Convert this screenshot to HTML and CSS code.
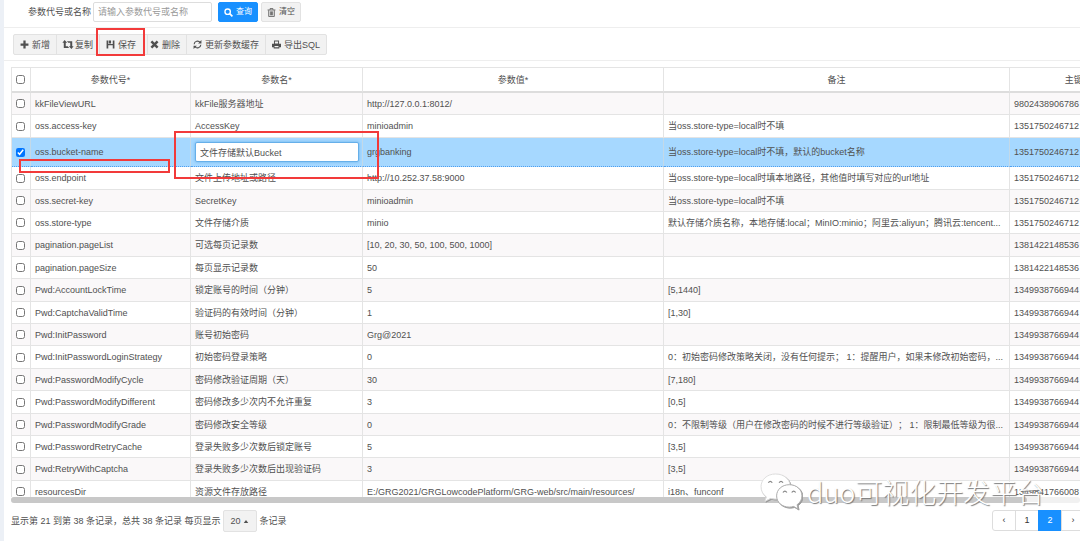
FILE: index.html
```html
<!DOCTYPE html>
<html lang="zh-CN">
<head>
<meta charset="utf-8">
<title>参数管理</title>
<link rel="stylesheet" href="styles.css">
</head>
<body>
<main class="page">
  <form class="search">
    <label for="kw">参数代号或名称</label>
    <input id="kw" class="field" type="text" placeholder="请输入参数代号或名称">
    <button type="button" class="btn primary"><svg class="ico" viewBox="0 0 16 16"><circle cx="6.5" cy="6.5" r="4.8" fill="none" stroke="currentColor" stroke-width="2.4"/><path d="M10 10l5 5" stroke="currentColor" stroke-width="3"/></svg>查询</button>
    <button type="button" class="btn"><svg class="ico" viewBox="0 0 16 16"><path d="M1 3.5h14M5.5 3V1h5v2M3 4v11h10V4M6 6v7M8 6v7M10 6v7" fill="none" stroke="currentColor" stroke-width="1.4"/></svg>清空</button>
  </form>
  <div class="toolbar">
    <div class="group">
      <button type="button"><svg class="ico" viewBox="0 0 16 16"><path d="M8 1v14M1 8h14" stroke="currentColor" stroke-width="4"/></svg>新增</button>
      <button type="button" class="copy"><svg class="ico wide" viewBox="0 0 20 16"><path d="M4 0L0 5h2.500v9H12l-2.500-3H6V5h2.500zM16 16l4-5h-2.500V2H8l2.500 3H14v6h-2.500z" fill="currentColor"/></svg>复制</button>
      <button type="button" class="save"><svg class="ico" viewBox="0 0 16 16"><path d="M1 1h3v6h8V1h3v14h-3V9.500H4V15H1zM5 1h4v5H5z" fill="currentColor"/></svg>保存</button>
      <button type="button" class="remove"><svg class="ico" viewBox="0 0 16 16"><path d="M2.500 2.500l11 11M13.500 2.500l-11 11" stroke="currentColor" stroke-width="4.400"/></svg>删除</button>
      <button type="button"><svg class="ico" viewBox="0 0 16 16"><path d="M2 7.500A6 6 0 0 1 12.800 4.500M14 8.500A6 6 0 0 1 3.200 11.500" fill="none" stroke="currentColor" stroke-width="2"/><path d="M15 0v6H9zM1 16v-6h6z" fill="currentColor"/></svg>更新参数缓存</button>
      <button type="button"><svg class="ico" viewBox="0 0 16 16"><path d="M3.500 1h9v5.500H16V13h-3v2H3v-2H0V6.500h3.500z" fill="currentColor"/><path d="M5.200 2.800h5.600V6H5.200zM4.500 10.500h7v2.500h-7z" fill="#f2f2f2"/></svg>导出SQL</button>
    </div>
  </div>
  <section class="grid">
    <div class="viewport">
      <table>
        <colgroup><col class="c-check"><col class="c-code"><col class="c-name"><col class="c-value"><col class="c-note"><col class="c-id"></colgroup>
        <thead>
          <tr><th><input type="checkbox" aria-label="全选"></th><th>参数代号*</th><th>参数名*</th><th>参数值*</th><th>备注</th><th>主键*</th></tr>
        </thead>
        <tbody>
          <tr><td><input type="checkbox" aria-label="选择"></td><td>kkFileViewURL</td><td>kkFile服务器地址</td><td>http://127.0.0.1:8012/</td><td></td><td>9802438906786</td></tr>
          <tr><td><input type="checkbox" aria-label="选择"></td><td>oss.access-key</td><td>AccessKey</td><td>minioadmin</td><td>当oss.store-type=local时不填</td><td>1351750246712</td></tr>
          <tr class="selected"><td><input type="checkbox" aria-label="选择" checked></td><td>oss.bucket-name</td><td><input class="edit" type="text" aria-label="参数名" value="文件存储默认Bucket"></td><td>grgbanking</td><td>当oss.store-type=local时不填，默认的bucket名称</td><td>1351750246712</td></tr>
          <tr><td><input type="checkbox" aria-label="选择"></td><td>oss.endpoint</td><td>文件上传地址或路径</td><td>http://10.252.37.58:9000</td><td>当oss.store-type=local时填本地路径，其他值时填写对应的url地址</td><td>1351750246712</td></tr>
          <tr><td><input type="checkbox" aria-label="选择"></td><td>oss.secret-key</td><td>SecretKey</td><td>minioadmin</td><td>当oss.store-type=local时不填</td><td>1351750246712</td></tr>
          <tr><td><input type="checkbox" aria-label="选择"></td><td>oss.store-type</td><td>文件存储介质</td><td>minio</td><td>默认存储介质名称，本地存储:local；MinIO:minio；阿里云:aliyun；腾讯云:tencent...</td><td>1351750246712</td></tr>
          <tr><td><input type="checkbox" aria-label="选择"></td><td>pagination.pageList</td><td>可选每页记录数</td><td>[10, 20, 30, 50, 100, 500, 1000]</td><td></td><td>1381422148536</td></tr>
          <tr><td><input type="checkbox" aria-label="选择"></td><td>pagination.pageSize</td><td>每页显示记录数</td><td>50</td><td></td><td>1381422148536</td></tr>
          <tr><td><input type="checkbox" aria-label="选择"></td><td>Pwd:AccountLockTime</td><td>锁定账号的时间（分钟）</td><td>5</td><td>[5,1440]</td><td>1349938766944</td></tr>
          <tr><td><input type="checkbox" aria-label="选择"></td><td>Pwd:CaptchaValidTime</td><td>验证码的有效时间（分钟）</td><td>1</td><td>[1,30]</td><td>1349938766944</td></tr>
          <tr><td><input type="checkbox" aria-label="选择"></td><td>Pwd:InitPassword</td><td>账号初始密码</td><td>Grg@2021</td><td></td><td>1349938766944</td></tr>
          <tr><td><input type="checkbox" aria-label="选择"></td><td>Pwd:InitPasswordLoginStrategy</td><td>初始密码登录策略</td><td>0</td><td>0：初始密码修改策略关闭，没有任何提示； 1：提醒用户，如果未修改初始密码，...</td><td>1349938766944</td></tr>
          <tr><td><input type="checkbox" aria-label="选择"></td><td>Pwd:PasswordModifyCycle</td><td>密码修改验证周期（天）</td><td>30</td><td>[7,180]</td><td>1349938766944</td></tr>
          <tr><td><input type="checkbox" aria-label="选择"></td><td>Pwd:PasswordModifyDifferent</td><td>密码修改多少次内不允许重复</td><td>3</td><td>[0,5]</td><td>1349938766944</td></tr>
          <tr><td><input type="checkbox" aria-label="选择"></td><td>Pwd:PasswordModifyGrade</td><td>密码修改安全等级</td><td>0</td><td class="full">0：不限制等级（用户在修改密码的时候不进行等级验证）； 1：限制最低等级为很...</td><td>1349938766944</td></tr>
          <tr><td><input type="checkbox" aria-label="选择"></td><td>Pwd:PasswordRetryCache</td><td>登录失败多少次数后锁定账号</td><td>5</td><td>[3,5]</td><td>1349938766944</td></tr>
          <tr><td><input type="checkbox" aria-label="选择"></td><td>Pwd:RetryWithCaptcha</td><td>登录失败多少次数后出现验证码</td><td>3</td><td>[3,5]</td><td>1349938766944</td></tr>
          <tr><td><input type="checkbox" aria-label="选择"></td><td>resourcesDir</td><td>资源文件存放路径</td><td>E:/GRG2021/GRGLowcodePlatform/GRG-web/src/main/resources/</td><td>i18n、funconf</td><td>1349841766008</td></tr>
        </tbody>
      </table>
    </div>
    <div class="track"><div class="thumb"></div></div>
  </section>
  <footer class="footer">
    <span>显示第 21 到第 38 条记录，总共 38 条记录 每页显示</span>
    <button type="button" class="size">20<svg class="caret" viewBox="0 0 6 4"><path d="M0 4l3-4 3 4z" fill="currentColor"/></svg></button>
    <span>条记录</span>
    <nav class="pages" aria-label="分页"><a href="#">‹</a><a href="#">1</a><a href="#" class="current">2</a><a href="#">›</a></nav>
  </footer>
</main>
<div class="mark mark-save"></div>
<div class="mark mark-row"></div>
<div class="mark mark-edit"></div>
<div class="watermark">
  <svg class="logo" viewBox="0 0 44 40">
    <g class="bubbles" fill="#fff" stroke="#ddd" stroke-width="1">
      <path d="M16 1C7 1 1 7 1 14c0 4.500 2 8 5.500 10.500L5 29l6-3c10 3 20-3 20-12C31 7 25 1 16 1z"/>
      <path d="M30 12c-7.500 0-13 5-13 11.500S22.500 35 30 35c1.500 0 3-.200 4.500-.700L39 37l-1-4.500c3.200-2.200 5-5.500 5-9C43 17 37.500 12 30 12z" stroke="#aaa"/>
    </g>
    <path d="M8.500 10q2-3 4 0M19.500 10q2-3 4 0M23.500 20q2-3 4 0M32.500 20q2-3 4 0" fill="none" stroke="#888" stroke-width="1.300"/>
  </svg>
  <span>duo可视化开发平台</span>
</div>
</body>
</html>
```
FILE: styles.css
```css
* { box-sizing: border-box; }
body {
  margin: 0;
  overflow: hidden;
  background: #fff;
  color: #505050;
  font: 9px/12px "Liberation Sans", "Noto Sans CJK SC", sans-serif;
}
button, input { font: inherit; color: inherit; margin: 0; }
.page {
  position: relative;
  min-height: 100vh;
  border-left: 4px solid #ecf0f6;
}
.ico { width: 9px; height: 9px; margin-right: 3px; flex: none; }
.ico.wide { width: 12px; margin-right: 1px; }

.search {
  display: flex;
  align-items: center;
  padding: 2px 0 5px 24px;
  border-bottom: 1px solid #eee;
}
.field {
  width: 119px;
  height: 20px;
  margin: 0 6px 0 2px;
  padding: 0 4px;
  border: 1px solid #ddd;
  border-radius: 2px;
  background: #fff;
}
.field::placeholder { color: #999; }
.btn {
  display: flex;
  align-items: center;
  justify-content: center;
  width: 40px;
  height: 20px;
  margin-right: 3px;
  padding: 0;
  border: 1px solid #e2e2e2;
  border-radius: 2px;
  background: #f2f2f2;
  font-size: 8px;
}
.btn.primary { border-color: #1890ff; background: #1890ff; color: #fff; }

.toolbar { padding: 6px 9px 5px; border-bottom: 1px solid #eee; }
.group {
  display: inline-flex;
  vertical-align: top;
  height: 21px;
  border: 1px solid #e2e2e2;
  border-radius: 2px;
  background: #f2f2f2;
}
.group button {
  display: flex;
  align-items: center;
  padding: 0 6px;
  border: 0;
  border-right: 1px solid #e2e2e2;
  background: none;
}
.group .copy { padding-left: 5px; }
.group .save { padding-right: 11px; }
.group .remove { padding-left: 2px; }
.group button:last-child { border-right: 0; }

.grid { margin: 6px 0 0 7px; border-top: 1px solid #e4e4e4; }
.viewport { height: 429px; overflow: hidden; border-left: 1px solid #e4e4e4; }
table { width: 1130px; table-layout: fixed; border-collapse: separate; border-spacing: 0; }
.c-check { width: 19px; }
.c-code { width: 160px; }
.c-name { width: 172px; }
.c-value { width: 301px; }
.c-note { width: 346px; }
.c-id { width: 132px; }
th, td {
  height: 22px;
  padding: 0 4px;
  border-right: 1px solid #e4e4e4;
  border-bottom: 1px solid #e4e4e4;
  text-align: left;
  vertical-align: middle;
  white-space: nowrap;
  font-weight: normal;
}
th { height: 25px; border-bottom: 2px solid #ddd; text-align: center; }
tbody tr:nth-child(odd) { background: #faf8f9; }
tbody tr:nth-child(5n+2) td, tbody tr:nth-child(5n+4) td { height: 23px; }
tbody tr.selected { background: #a6d8ff; }
tbody tr.selected td { height: 29px; border-bottom: 1px dotted #4f9ff0; border-right-color: #c3d9e8; }
.full { text-spacing-trim: space-all; }
input[type="checkbox"] { display: block; width: 9px; height: 9px; }
.edit {
  display: block;
  width: 164px;
  height: 20px;
  padding: 0 4px;
  border: 1px solid #66afe9;
  border-radius: 2px;
  background: #fff;
  box-shadow: 0 0 3px #66afe9;
}
.track { height: 6px; background: #f1f1f1; border-radius: 3px; }
.thumb { width: 95%; height: 6px; border-radius: 3px; background: #c8c8c8; }

.footer { display: flex; align-items: center; padding: 7px 0 0 7px; }
.size {
  display: flex;
  align-items: center;
  justify-content: center;
  gap: 2px;
  width: 34px;
  height: 22px;
  margin: 0 3px 0 2px;
  padding: 0;
  border: 1px solid #e2e2e2;
  border-radius: 2px;
  background: #f2f2f2;
}
.caret { width: 6px; height: 3px; }
.pages { display: flex; align-self: flex-start; margin: 0 -4px 0 auto; }
.pages a {
  width: 24px;
  height: 21px;
  margin-right: -1px;
  border: 1px solid #ddd;
  color: #333;
  line-height: 19px;
  text-align: center;
  text-decoration: none;
}
.pages a:first-child { border-radius: 3px 0 0 3px; }
.pages .current { border-color: #1890ff; background: #1890ff; color: #fff; }

.mark { position: absolute; border: 2px solid #f23a3a; }
.mark-save { left: 96px; top: 28px; width: 49px; height: 28px; }
.mark-row { left: 19px; top: 159px; width: 151px; height: 14px; }
.mark-edit { left: 174px; top: 131px; width: 205px; height: 48px; }
.watermark {
  position: absolute;
  left: 760px;
  top: 472px;
  display: flex;
  align-items: center;
  gap: 4px;
  color: #fff;
  font: 300 27px/40px "Noto Sans CJK SC", sans-serif;
  white-space: nowrap;
  text-shadow: 1px 1px 1px #777;
}
.logo { width: 43px; height: 39px; }
.bubbles { filter: drop-shadow(1px 1px 0 #999); }
```
